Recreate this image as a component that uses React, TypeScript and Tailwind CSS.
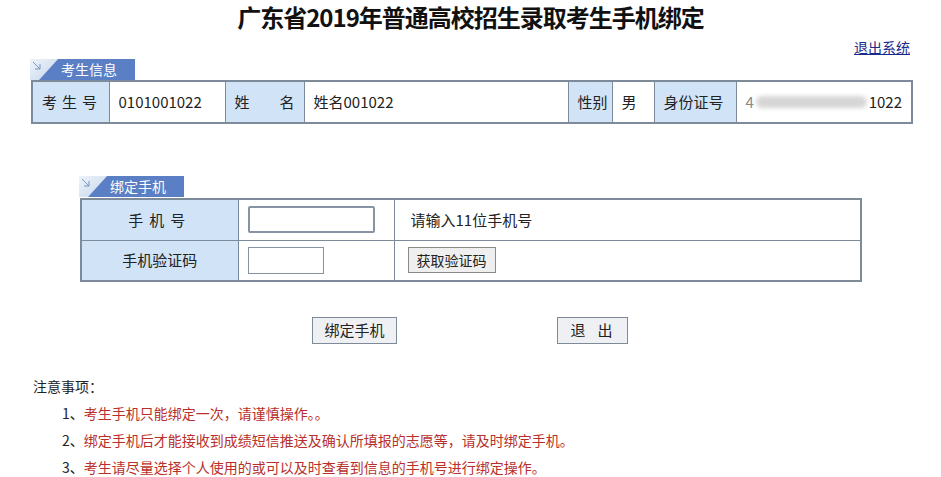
import React from "react";

const font = { fontFamily: '"Microsoft YaHei", "Noto Sans CJK SC", "Noto Sans", sans-serif' };

function Tab({ label }: { label: string }) {
  return (
    <div className="relative h-[21px] w-[105px]">
      <svg width="105" height="21" viewBox="0 0 105 21" className="absolute left-0 top-0">
        <defs>
          <linearGradient id="corner" x1="0" y1="0" x2="1" y2="1">
            <stop offset="0" stopColor="#eef3fa" />
            <stop offset="1" stopColor="#c5d6ec" />
          </linearGradient>
        </defs>
        <polygon points="0,0 28,0 9,21 0,21" fill="url(#corner)" />
        <polygon points="28,0 105,0 105,21 9,21" fill="#5a7fc4" />
        <path d="M3 3 L10 10 M10 5 L10 10 L5 10" stroke="#7b95bd" strokeWidth="1" fill="none" />
      </svg>
      <span className="absolute left-[31px] top-0 text-[14px] leading-[21px] text-white">{label}</span>
    </div>
  );
}

const th = "bg-[#d0e3f7] border border-[#7c8a99] px-[9px] text-[15px] text-[#222] whitespace-nowrap";
const td = "bg-white border border-[#7c8a99] px-[9px] text-[15px] text-[#222] whitespace-nowrap";

export default function App() {
  return (
    <div className="w-[941px] h-[477px] bg-white overflow-hidden" style={font}>
      <h1 className="text-center text-[24px] font-bold leading-[27px] pt-[3px] pb-[1px] text-[#111] tracking-[-1px]">
        广东省2019年普通高校招生录取考生手机绑定
      </h1>

      <div className="flex justify-end pr-[31px] mt-[8px]">
        <a href="#" className="text-[14px] leading-[16px] text-[#1a2a8c] underline">退出系统</a>
      </div>

      <div className="ml-[30px] mt-[4px]">
        <Tab label="考生信息" />
      </div>
      <table className="ml-[31px] w-[880px] table-fixed border-collapse border-2 border-[#7c8a99]">
        <colgroup>
          <col className="w-[77px]" />
          <col className="w-[116px]" />
          <col className="w-[79px]" />
          <col className="w-[264px]" />
          <col className="w-[44px]" />
          <col className="w-[42px]" />
          <col className="w-[82px]" />
          <col className="w-[176px]" />
        </colgroup>
        <tbody>
          <tr className="h-[42px]">
            <td className={`${th} tracking-[5px]`}>考生号</td>
            <td className={td}>0101001022</td>
            <td className={th}>
              <div className="flex justify-between"><span>姓</span><span>名</span></div>
            </td>
            <td className={td}>姓名001022</td>
            <td className={`${th} px-[6px]`}>性别</td>
            <td className={td}>男</td>
            <td className={th}>身份证号</td>
            <td className={td}>
              <div className="flex items-center">
                <span className="text-[#888]">4</span>
                <span className="h-[12px] w-[112px] rounded-full bg-[#d6d6d6] blur-[2px] mx-[2px]" />
                <span className="ml-auto">1022</span>
              </div>
            </td>
          </tr>
        </tbody>
      </table>

      <div className="ml-[79px] mt-[52px]">
        <Tab label="绑定手机" />
      </div>
      <table className="ml-[80px] mt-[1px] w-[782px] table-fixed border-collapse border-2 border-[#7c8a99]">
        <colgroup>
          <col className="w-[157px]" />
          <col className="w-[156px]" />
          <col />
        </colgroup>
        <tbody>
          <tr className="h-[41px]">
            <td className={`${th} text-center tracking-[6px]`}>手机号</td>
            <td className={`${td} px-[8px]`}>
              <input className="block h-[27px] w-[127px] border-2 border-[#8593a2] rounded-[2px] bg-white" />
            </td>
            <td className={`${td} px-[16px]`}>请输入11位手机号</td>
          </tr>
          <tr className="h-[41px]">
            <td className={`${th} text-center`}>手机验证码</td>
            <td className={`${td} px-[8px]`}>
              <input className="block h-[27px] w-[76px] border border-[#8593a2] bg-white" />
            </td>
            <td className={`${td} px-[13px]`}>
              <button className="h-[26px] px-[8px] border border-[#8a8a8a] bg-[#efefef] text-[14px] text-[#222]">
                获取验证码
              </button>
            </td>
          </tr>
        </tbody>
      </table>

      <div className="flex mt-[35px] pl-[312px] gap-[160px]">
        <button className="h-[27px] w-[85px] border border-[#7c8a99] bg-[#eef0f3] text-[15px] text-[#222]">绑定手机</button>
        <button className="h-[27px] w-[71px] border border-[#7c8a99] bg-[#eef0f3] text-[15px] text-[#222] tracking-[12px] pl-[10px]">退出</button>
      </div>

      <div className="mt-[29px] pl-[33px] text-[14px] text-[#222] leading-[27px]">
        <p>注意事项：</p>
        <ol className="pl-[29px]">
          <li>1、<span className="text-[#b8302b]">考生手机只能绑定一次，请谨慎操作。。</span></li>
          <li>2、<span className="text-[#b8302b]">绑定手机后才能接收到成绩短信推送及确认所填报的志愿等，请及时绑定手机。</span></li>
          <li>3、<span className="text-[#b8302b]">考生请尽量选择个人使用的或可以及时查看到信息的手机号进行绑定操作。</span></li>
        </ol>
      </div>
    </div>
  );
}
